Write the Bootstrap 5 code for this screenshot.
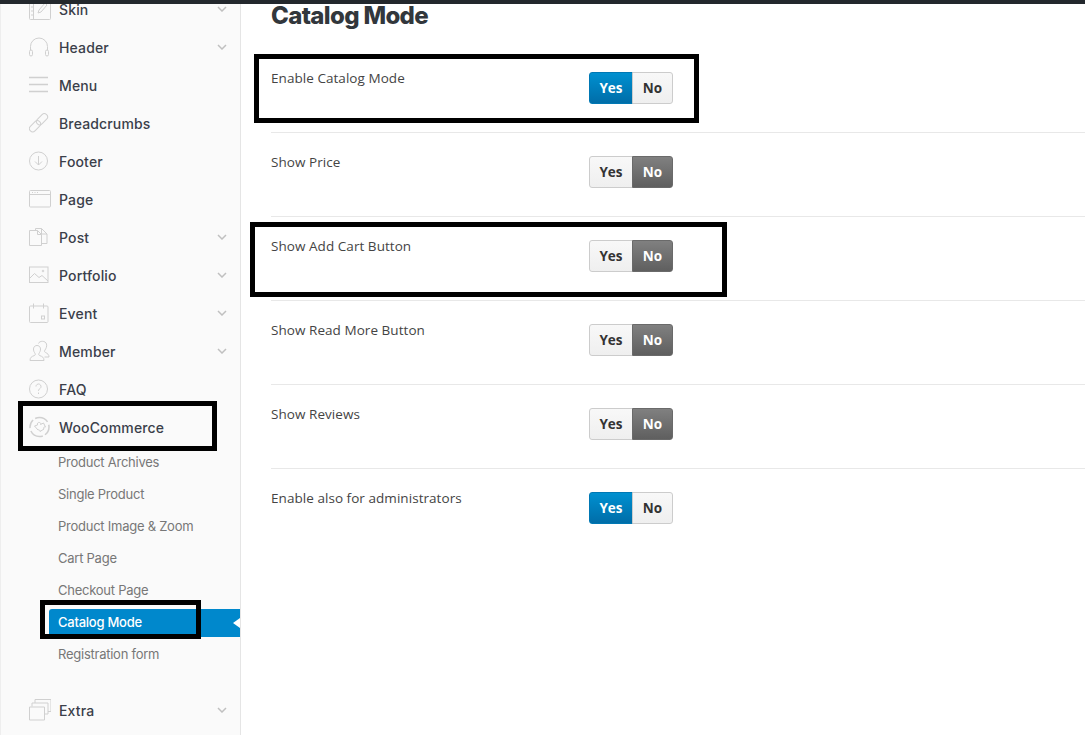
<!DOCTYPE html>
<html lang="en">
<head>
  <meta charset="UTF-8">
  <meta name="viewport" content="width=device-width, initial-scale=1.0">
  <link rel="stylesheet" href="https://cdn.jsdelivr.net/npm/bootstrap@5.3.2/dist/css/bootstrap.min.css">
  <title>Catalog Mode</title>
  <style>
    html, body { height: 735px; overflow: hidden; background: #fff; }
    .top-strip { height: 4px; background: #23282d; position: relative; z-index: 2; }
    .page-wrap { height: 731px; overflow: hidden; }
    .side-panel { width: 241px; flex: none; background: #fafafa; border-left: 1px solid #eee; border-right: 1px solid #e5e5e5; overflow: hidden; }
    .side-list { margin: -14px 0 0; padding: 0 0 0 28px; list-style: none; }
    .side-item { height: 38px; font: 500 14px Inter, sans-serif; letter-spacing: .15px; color: #3b3f4a; }
    .side-item svg.ico { width: 22px; height: 22px; margin-right: 8px; flex: none; fill: none; stroke: #d0d0d0; stroke-width: 1; }
    .side-item svg.chev { width: 10px; height: 6px; margin-left: auto; margin-right: 13px; fill: none; stroke: #c0c0c0; stroke-width: 1.5; }
    .sub-list { margin: 0 0 18px; padding: 0 0 3px; list-style: none; }
    .sub-item { height: 32px; margin-left: 48px; padding-left: 9px; font: 400 13px Inter, sans-serif; letter-spacing: -.25px; color: #777; }
    .sub-on { height: 28px; margin-top: 3px; margin-bottom: 1px; padding-bottom: 2px; background: #0088cc; color: #fff; font-weight: 500; border-radius: 3px 0 0 3px; position: relative; }
    .sub-on::after { content: ""; position: absolute; right: 0; top: 9px; border: 5px solid transparent; border-right: 7px solid #fff; border-left: 0; }
    .main-panel { padding: 0 0 0 30px; min-width: 0; }
    .page-title { font: 800 24px/24px Inter, sans-serif; letter-spacing: -.65px; color: #32373c; margin: 0 0 21px; }
    .opt-row { height: 84px; padding-top: 23px; border-bottom: 1px solid #e8e8e8; }
    .opt-label { width: 318px; font: 400 13.5px/13px "Open Sans", sans-serif; letter-spacing: .05px; color: #444; }
    .opt-row:last-child { border-bottom: 0; }
    .opt-btns .btn { height: 32px; padding: 0; font: 700 13.5px "Open Sans", sans-serif; --bs-btn-border-radius: 3px; color: #333; background: linear-gradient(#f8f8f8, #efefef); border: 1px solid #ccc; box-shadow: none; }
    .opt-btns .btn-yes { width: 44px; }
    .opt-btns .btn-no { width: 41px; }
    .opt-btns .btn.on-blue { color: #fff; background: linear-gradient(#0090d0, #006da8); border-color: #0078b4; }
    .opt-btns .btn.on-grey { color: #fff; background: linear-gradient(#808080, #5f5f5f); border-color: #6a6a6a; }
    .mark-box { position: absolute; border: 5px solid #000; z-index: 5; }
    .mb-a { left: 254px; top: 54px; width: 445px; height: 69px; }
    .mb-b { left: 250px; top: 222px; width: 477px; height: 75px; }
    .mb-c { left: 18px; top: 401px; width: 199px; height: 50px; }
    .mb-d { left: 40px; top: 600px; width: 161px; height: 39px; }
  </style>
</head>
<body class="position-relative">

  <div class="top-strip"></div>

  <div class="page-wrap d-flex">
    <aside class="side-panel">
      <ul class="side-list">
        <li class="side-item d-flex align-items-center">
          <svg class="ico" viewBox="0 0 22 22"><rect x=".5" y=".5" width="21" height="21" rx="1"/><path d="M4.500 1v20M2 5h2.500M2 9h2.500M2 13h2.500M2 17h2.500M9 15l1-3 6-7 2 2-6 7z"/></svg>
          <span>Skin</span>
          <svg class="chev" viewBox="0 0 10 6"><path d="M1 1l4 4 4-4"/></svg>
        </li>
        <li class="side-item d-flex align-items-center">
          <svg class="ico" viewBox="0 0 22 22"><path d="M1.500 14V10.500a8.500 8.500 0 0 1 17 0V14"/><rect x=".5" y="14" width="3" height="6" rx="1.500"/><rect x="16.500" y="14" width="3" height="6" rx="1.500"/></svg>
          <span>Header</span>
          <svg class="chev" viewBox="0 0 10 6"><path d="M1 1l4 4 4-4"/></svg>
        </li>
        <li class="side-item d-flex align-items-center">
          <svg class="ico" viewBox="0 0 22 22"><path d="M0 3.500h19M0 10.500h19M0 17.500h19" stroke-width="1.300"/></svg>
          <span>Menu</span>
        </li>
        <li class="side-item d-flex align-items-center">
          <svg class="ico" viewBox="0 0 22 22"><rect x="-.5" y="11" width="13" height="6.500" rx="3.200" transform="rotate(-45 6 14.250)"/><rect x="6.500" y="4" width="13" height="6.500" rx="3.200" transform="rotate(-45 13 7.250)"/></svg>
          <span>Breadcrumbs</span>
        </li>
        <li class="side-item d-flex align-items-center">
          <svg class="ico" viewBox="0 0 22 22"><circle cx="9.500" cy="11" r="9"/><path d="M9.500 6v9M6 11.500l3.500 3.500 3.500-3.500"/></svg>
          <span>Footer</span>
        </li>
        <li class="side-item d-flex align-items-center">
          <svg class="ico" viewBox="0 0 22 22"><rect x=".5" y="2.500" width="21" height="16.500" rx="1"/><path d="M.5 6.500h21M3 4.500h1M5.500 4.500h1M8 4.500h1"/></svg>
          <span>Page</span>
        </li>
        <li class="side-item d-flex align-items-center">
          <svg class="ico" viewBox="0 0 22 22"><path d="M6.500 4V2.500h6l5.500 5.500v9.500h-5M12.500 2.500V8h5.500M.5 4.500h8l4 4v11H.5zM8.500 4.500v4h4"/></svg>
          <span>Post</span>
          <svg class="chev" viewBox="0 0 10 6"><path d="M1 1l4 4 4-4"/></svg>
        </li>
        <li class="side-item d-flex align-items-center">
          <svg class="ico" viewBox="0 0 22 22"><rect x=".5" y="3" width="18.500" height="15.500"/><path d="M.5 14.500l5-5 4.500 4 3-2 6 5.500"/><circle cx="14" cy="7" r=".8"/></svg>
          <span>Portfolio</span>
          <svg class="chev" viewBox="0 0 10 6"><path d="M1 1l4 4 4-4"/></svg>
        </li>
        <li class="side-item d-flex align-items-center">
          <svg class="ico" viewBox="0 0 22 22"><rect x=".5" y="4" width="18.500" height="16.500" rx="1"/><path d="M4.500 1.500v5M14.500 1.500v5"/><rect x="12.500" y="14" width="3" height="3"/></svg>
          <span>Event</span>
          <svg class="chev" viewBox="0 0 10 6"><path d="M1 1l4 4 4-4"/></svg>
        </li>
        <li class="side-item d-flex align-items-center">
          <svg class="ico" viewBox="0 0 22 22"><path d="M1 20.500c0-3 1.500-4 4.500-5 1-.5 1-1.500 0-3-2-3-1-7 2.500-7s4.500 4 2.500 7c-1 1.500-1 2.500 0 3 3 1 4.500 2 4.500 5zM9.500 3.500c1-3 7-3 8 .5 .6 2.500-.5 4.500-1.500 6-.8 1.200-.5 2 .5 2.500 2 1 3.500 2 3.500 4.500h-4.500"/></svg>
          <span>Member</span>
          <svg class="chev" viewBox="0 0 10 6"><path d="M1 1l4 4 4-4"/></svg>
        </li>
        <li class="side-item d-flex align-items-center">
          <svg class="ico" viewBox="0 0 22 22"><circle cx="9.500" cy="11" r="9"/><path d="M7 8.500a2.500 2.500 0 1 1 4 2c-1 .8-1.500 1.300-1.500 2.500M9.500 14.500v1.500"/></svg>
          <span>FAQ</span>
        </li>
        <li class="side-item d-flex align-items-center">
          <svg class="ico" viewBox="0 0 22 22"><circle cx="10.500" cy="11" r="9.500" stroke-dasharray="9 2.500 14 3" stroke-width="1.500"/><path d="M5.500 10l3-1c-.5-1.500 .5-3 2-2.500s1.500 1.500 1 2l3-1.500 2 4c-1.500-.3-2.500.7-1.500 2l-4 2.500c0-1.500-1-2-2-1.500z"/></svg>
          <span>WooCommerce</span>
        </li>
      </ul>
      <ul class="sub-list">
        <li class="sub-item d-flex align-items-center">Product Archives</li>
        <li class="sub-item d-flex align-items-center">Single Product</li>
        <li class="sub-item d-flex align-items-center">Product Image &amp; Zoom</li>
        <li class="sub-item d-flex align-items-center">Cart Page</li>
        <li class="sub-item d-flex align-items-center">Checkout Page</li>
        <li class="sub-item sub-on d-flex align-items-center">Catalog Mode</li>
        <li class="sub-item d-flex align-items-center">Registration form</li>
      </ul>
      <ul class="side-list mt-0">
        <li class="side-item d-flex align-items-center">
          <svg class="ico" viewBox="0 0 22 22"><path d="M6 4V.5h16v12h-3M3 7.500V4h16v11h-3M.5 8h15v13H.5z"/></svg>
          <span>Extra</span>
          <svg class="chev" viewBox="0 0 10 6"><path d="M1 1l4 4 4-4"/></svg>
        </li>
      </ul>
    </aside>

    <main class="main-panel flex-grow-1">
      <h1 class="page-title">Catalog Mode</h1>

      <div class="opt-row d-flex align-items-start">
        <div class="opt-label">Enable Catalog Mode</div>
        <div class="btn-group opt-btns"><button class="btn btn-yes on-blue">Yes</button><button class="btn btn-no">No</button></div>
      </div>
      <div class="opt-row d-flex align-items-start">
        <div class="opt-label">Show Price</div>
        <div class="btn-group opt-btns"><button class="btn btn-yes">Yes</button><button class="btn btn-no on-grey">No</button></div>
      </div>
      <div class="opt-row d-flex align-items-start">
        <div class="opt-label">Show Add Cart Button</div>
        <div class="btn-group opt-btns"><button class="btn btn-yes">Yes</button><button class="btn btn-no on-grey">No</button></div>
      </div>
      <div class="opt-row d-flex align-items-start">
        <div class="opt-label">Show Read More Button</div>
        <div class="btn-group opt-btns"><button class="btn btn-yes">Yes</button><button class="btn btn-no on-grey">No</button></div>
      </div>
      <div class="opt-row d-flex align-items-start">
        <div class="opt-label">Show Reviews</div>
        <div class="btn-group opt-btns"><button class="btn btn-yes">Yes</button><button class="btn btn-no on-grey">No</button></div>
      </div>
      <div class="opt-row d-flex align-items-start">
        <div class="opt-label">Enable also for administrators</div>
        <div class="btn-group opt-btns"><button class="btn btn-yes on-blue">Yes</button><button class="btn btn-no">No</button></div>
      </div>
    </main>
  </div>

  <div class="mark-box mb-a"></div>
  <div class="mark-box mb-b"></div>
  <div class="mark-box mb-c"></div>
  <div class="mark-box mb-d"></div>

  <script src="https://cdn.jsdelivr.net/npm/bootstrap@5.3.2/dist/js/bootstrap.bundle.min.js"></script>
</body>
</html>
